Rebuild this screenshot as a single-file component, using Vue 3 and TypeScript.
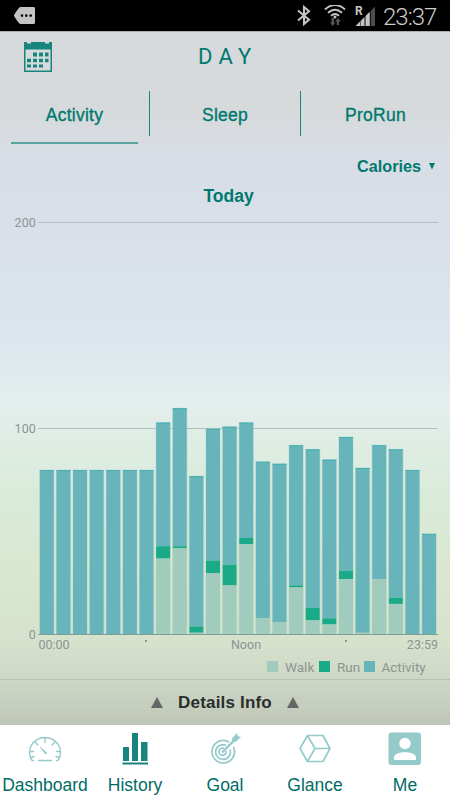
<script setup lang="ts">
interface Bar { walk: number; run: number; total: number }

const raw: [number, number, number][] = [
  [0, 0, 80], [0, 0, 80], [0, 0, 80], [0, 0, 80], [0, 0, 80], [0, 0, 80], [0, 0, 80],
  [37, 6, 103], [42, 1, 110], [1, 3, 77], [30, 6, 100], [24, 10, 101], [44, 3, 103],
  [8, 0, 84], [6, 0, 83], [23, 1, 92], [7, 6, 90], [5, 3, 85], [27, 4, 96],
  [1, 0, 81], [27, 0, 92], [15, 3, 90], [0, 0, 80], [0, 0, 49],
]
const bars: Bar[] = raw.map(([walk, run, total]) => ({ walk, run, total }))
const unit = 2.06
const base = 414.8
const pitch = 16.62
const barX = (i: number) => 39.8 + i * pitch
const tabs = ['Activity', 'Sleep', 'ProRun']
const legend = [
  { label: 'Walk', kind: 'walk' },
  { label: 'Run', kind: 'run' },
  { label: 'Activity', kind: 'activity' },
]
</script>

<template>
  <div class="screen">
    <header class="status">
      <svg class="message" width="21" height="17" viewBox="0 0 21 17">
        <path d="M6 0H20L21 1V16L20 17H6L4 15 0 9V8L4 2Z" fill="#c4c4c4" />
        <circle cx="8" cy="8.6" r="1.3" /><circle cx="12.3" cy="8.6" r="1.3" /><circle cx="16.700" cy="8.6" r="1.3" />
      </svg>
      <svg class="signals" width="82" height="23" viewBox="0 0 82 23">
        <path d="M1 5.500 12 14.800 7 19V2L12 6.200 1 15.500" fill="none" stroke="#c4c4c4" stroke-width="2.100" />
        <g fill="none" stroke="#c4c4c4" stroke-width="1.900">
          <path d="M28 4.500Q38-4.500 48 4.500M31 7.800Q38 1.500 45 7.800M34 10.900Q38 7 42 10.900" />
        </g>
        <circle cx="38" cy="12" r="1.500" fill="#c4c4c4" />
        <path d="M34.500 13H37V17.500H38.500L35.700 21 33 17.500H34.500ZM39.700 20V16.500H38L41 13 44 16.500H42V20Z" fill="#555" />
        <path d="M58.500 21 63 16.500V21ZM63.500 16 67.500 12V21H63.500ZM68.500 11 72.800 6.800V21H68.500Z" fill="#c4c4c4" />
        <path d="M73.800 5.800 78 1.500V21H73.800Z" fill="#4c4c4c" />
        <text x="58" y="9.500" class="roaming">R</text>
      </svg>
      <span class="clock">23:37</span>
    </header>

    <main class="content">
      <div class="titlebar">
        <svg class="calendar" width="28" height="31" viewBox="0 0 28 31">
          <path d="M0 1H3V2.500H7V1H21V2.500H25V1H28V31H0ZM1.500 8.500V29.500H26.500V8.500Z" fill="#17847d" fill-rule="evenodd" />
          <path d="M9 11.500h4v4h-4zM15 11.500h4v4h-4zM21 11.500h3.500v4H21zM3 17.800h4v3.500H3zM9 17.800h4v3.500H9zM15 17.800h4v3.500h-4zM21 17.800h3.500v3.500H21zM3 23.500h4v3H3zM9 23.500h4v3H9zM15 23.500h4v3h-4z" fill="#17847d" />
        </svg>
        <h1>DAY</h1>
      </div>
      <nav class="tabs">
        <div v-for="(tab, i) in tabs" :key="tab" class="tab" :class="{ selected: i === 0 }">
          <span>{{ tab }}</span>
        </div>
      </nav>
      <div class="metric"><span>Calories</span><svg width="6" height="7" viewBox="0 0 6 7"><path d="M0 0H6L3 6.500Z" fill="#00796f" /></svg></div>
      <h2>Today</h2>

      <svg class="chart" width="450" height="440" viewBox="0 0 450 440">
        <g class="grid">
          <path d="M38 2.500H438M38 208.500H438" />
        </g>
        <g v-for="(bar, i) in bars" :key="i">
          <rect class="halo" :x="barX(i) - 0.7" :y="base - bar.total * unit - 0.6" width="15.400" :height="bar.total * unit + 0.6" />
          <rect class="activity" :x="barX(i)" :y="base - bar.total * unit" width="14" :height="(bar.total - bar.walk - bar.run) * unit" />
          <path class="cap" :d="`M${barX(i)} ${base - bar.total * unit + 0.5}h14`" />
          <rect class="run" :x="barX(i)" :y="base - (bar.walk + bar.run) * unit" width="14" :height="bar.run * unit" />
          <rect class="walk" :x="barX(i)" :y="base - bar.walk * unit" width="14" :height="bar.walk * unit" />
        </g>
        <path class="axis" d="M38 414.500H438" />
        <g class="labels">
          <text x="35.700" y="6.500" text-anchor="end">200</text>
          <text x="35.700" y="212.500" text-anchor="end">100</text>
          <text x="35.700" y="418.500" text-anchor="end">0</text>
          <text x="38.500" y="429">00:00</text>
          <text x="246" y="429" text-anchor="middle">Noon</text>
          <text x="438" y="429" text-anchor="end">23:59</text>
          <path d="M145 420h2v2h-2zM345 420h2v2h-2z" />
        </g>
      </svg>
      <div class="legend">
        <span v-for="item in legend" :key="item.kind" class="key" :class="item.kind"><i></i>{{ item.label }}</span>
      </div>
      <section class="details">
        <svg width="12" height="11" viewBox="0 0 12 11"><path d="M6 0 12 11H0Z" fill="#666" /></svg>
        <strong>Details Info</strong>
        <svg width="12" height="11" viewBox="0 0 12 11"><path d="M6 0 12 11H0Z" fill="#666" /></svg>
      </section>
    </main>

    <footer class="nav">
      <div class="item dashboard">
        <svg width="36" height="36" viewBox="0 0 36 36" fill="none" stroke="#94caca" stroke-width="1.400">
          <path d="M6.500 28.500H5C-2 17 7 5.500 18 5.500S38 17 31 28.500H29.500M11.500 28.500H24.500M18 5.500V10.500M8 10 11 13M28 10 25 13M2.500 19.500H6.500M33.500 19.500H29.500M4.500 25.500L7 24.500M31.500 25.500L29 24.500" stroke-linecap="round" />
          <path d="M13 15 20 21 18.500 22Z" fill="#94caca" stroke-width=".6" />
        </svg>
        <span>Dashboard</span>
      </div>
      <div class="item history">
        <svg width="36" height="36" viewBox="0 0 36 36" fill="#17847d">
          <path d="M6 15h6v14H6zM15 1h6v28h-6zM24 10h6.500v19H24zM5.500 30.500h25.500v2H5.500z" />
        </svg>
        <span>History</span>
      </div>
      <div class="item goal">
        <svg width="36" height="36" viewBox="0 0 36 36" fill="none" stroke="#94caca" stroke-width="1.700">
          <path d="M22 10A11.300 11.300 0 1 0 26.500 15M19 13.200A7.400 7.400 0 1 0 23 17.500M17 16.500A3.600 3.600 0 1 0 19 19" />
          <path d="M15 20.500 28.500 7" stroke-width="2.400" />
          <path d="M25.500 6 30 1.500 30.500 4.500 33.500 5 29 9.500 25.500 9Z" fill="#94caca" stroke-width=".6" />
        </svg>
        <span>Goal</span>
      </div>
      <div class="item glance">
        <svg width="36" height="36" viewBox="0 0 36 36" fill="none" stroke="#94caca" stroke-width="1.700" stroke-linejoin="round">
          <path d="M10.500 3.500H26L33 16.500 26 29.500H10.500L3 16.500ZM10.500 3.500 18 16.500 10.500 29.500M18 16.500H33" />
        </svg>
        <span>Glance</span>
      </div>
      <div class="item me">
        <svg width="36" height="36" viewBox="0 0 36 36">
          <rect x="1.500" y=".500" width="32.500" height="32.500" rx="3" fill="#94caca" />
          <circle cx="18" cy="11.500" r="5.700" fill="#fff" />
          <path d="M7 28V25.500C7 18.500 29 18.500 29 25.500V28Z" fill="#fff" />
        </svg>
        <span>Me</span>
      </div>
    </footer>
  </div>
</template>

<style>
body { margin: 0; }
</style>
<style scoped>
* { box-sizing: border-box; }
.screen { width: 450px; height: 800px; overflow: hidden; display: flex; flex-direction: column; font-family: "Liberation Sans", Arial, sans-serif; color: #00796f; }
.screen svg { display: block; flex: none; }
.status { height: 31px; flex: none; background: #000; display: flex; align-items: flex-start; padding-left: 14px; }
.message { margin-top: 7px; }
.signals { margin: 5px 0 0 262px; }
.roaming { font: bold 12px Roboto, sans-serif; fill: #c4c4c4; }
.clock { margin: 3px 0 0 4px; font: 300 24px/28px Roboto, sans-serif; color: #cecece; letter-spacing: -1px; }
.content { height: 694px; flex: none; display: flex; flex-direction: column; background: linear-gradient(#d7dadd 0, #d7dadd 25px, #d7dadb 75px, #d8dde5 125px, #d9e0e9 200px, #dce5ed 300px, #e4eeee 370px, #dfede4 410px, #d9ead8 475px, #dae8d1 530px, #d6e2cc 610px, #cdd7c6 649px, #bfc6b7 694px); border-top: 1px solid #aaadb0; }
.titlebar { height: 54px; flex: none; display: flex; padding: 9px 0 0 24px; }
h1 { margin: 3px 0 0 146px; font: 22px/26px Roboto, sans-serif; letter-spacing: 6.200px; }
.tabs { height: 62px; flex: none; display: flex; }
.tab { width: 150px; height: 45px; margin-top: 5px; border-right: 1px solid #17847d; text-align: center; font-size: 17.500px; line-height: 48px; letter-spacing: .25px; -webkit-text-stroke: .35px; }
.tab:nth-child(2) { width: 151px; }
.tab:last-child { width: 149px; border-right: 0; }
.selected { position: relative; }
.selected::after { content: ""; position: absolute; left: 11px; top: 51px; width: 127px; height: 2px; background: #5aa29d; }
.metric { height: 37px; flex: none; display: flex; align-items: center; justify-content: flex-end; gap: 8px; padding: 0 15px 0 0; font-weight: bold; font-size: 16.200px; }
h2 { margin: 0; height: 35px; flex: none; font-size: 17.500px; line-height: 23px; text-align: center; padding-left: 7px; }
.chart { height: 440px; overflow: visible; }
.grid path, .axis { stroke: #b7bec1; stroke-width: 1; }
.axis { stroke: #829d98; }
.halo { fill: #a8d4ce; opacity: .4; }
rect.activity { fill: #67b5ba; }
.cap { stroke: #48afb2; stroke-width: 1; }
rect.run { fill: #1aaa88; }
rect.walk { fill: #a1cbbc; }
.labels { fill: #8d9394; font: 12.500px Roboto, sans-serif; }
.legend { height: 19px; flex: none; display: flex; padding: 0 0 6px 267px; align-items: center; font: 13.500px Roboto, sans-serif; color: #8d9491; }
.key { display: flex; align-items: center; gap: 7px; }
.key.walk { width: 52px; }
.key.run { width: 44.500px; }
.key i { width: 11px; height: 11px; background: #a1cbbc; flex: none; }
.key.run i { background: #1aaa88; }
.key.activity i { background: #67b5ba; }
.details { flex: 1; border-top: 1px solid #b6bfb0; display: flex; justify-content: center; align-items: center; gap: 15px; color: #292d2c; font-size: 17px; letter-spacing: .18px; }
.nav { height: 75px; flex: none; background: #fff; display: flex; }
.item { width: 90px; display: flex; flex-direction: column; align-items: center; padding-top: 7px; font-size: 17.500px; line-height: 23px; color: #006d65; white-space: nowrap; }
.item span { margin-top: 6px; }
</style>
